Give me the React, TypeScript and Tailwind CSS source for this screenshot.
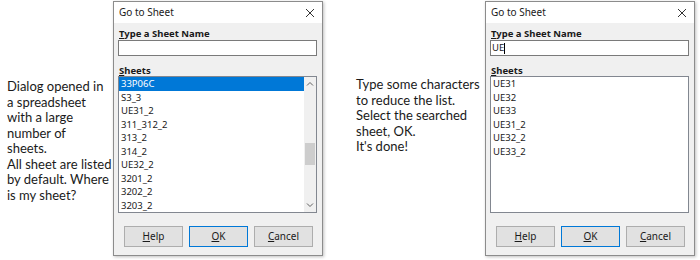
import React from 'react';

const ui = "font-['Noto_Sans','Open_Sans',sans-serif]";
const note = "font-['Lato','Open_Sans',sans-serif] text-[13px] leading-[15.5px] text-[#1a1a1a] whitespace-nowrap";

const allSheets = ['33P06C', 'S3_3', 'UE31_2', '311_312_2', '313_2', '314_2', 'UE32_2', '3201_2', '3202_2', '3203_2'];
const filtered = ['UE31', 'UE32', 'UE33', 'UE31_2', 'UE32_2', 'UE33_2'];

const leftNote = ['Dialog opened in', 'a spreadsheet', 'with a large', 'number of', 'sheets.', 'All sheet are listed', 'by default. Where', 'is my sheet?'];
const rightNote = ['Type some characters', 'to reduce the list.', 'Select the searched', 'sheet, OK.', "It's done!"];

function CloseIcon() {
    return (
        <svg width="10" height="10" viewBox="0 0 10 10">
            <path d="M1 1 L9 9 M9 1 L1 9" stroke="#333" strokeWidth="1" fill="none" />
        </svg>
    );
}

function Chevron({ up }: { up?: boolean }) {
    return (
        <svg width="8" height="5" viewBox="0 0 8 5">
            <path d={up ? 'M1 4.5 L4 1.5 L7 4.5' : 'M1 0.5 L4 3.5 L7 0.5'} stroke="#606060" strokeWidth="1" fill="none" />
        </svg>
    );
}

function Btn({ first, rest, primary }: { first: string; rest: string; primary?: boolean }) {
    return (
        <div
            className={`w-[59px] h-[21px] flex items-center justify-center text-[10px] text-[#1a1a1a] bg-[#e1e1e1] border ${primary ? 'border-[#0078d7]' : 'border-[#adadad]'}`}
        >
            <span className="underline underline-offset-1">{first}</span>
            {rest}
        </div>
    );
}

function GoToSheet({ query, sheets, selected, scroll }: { query: string; sheets: string[]; selected?: number; scroll?: boolean }) {
    return (
        <div className={`w-[210px] h-[255px] mt-[1px] border border-[#8c8c8c] bg-[#f0f0f0] flex flex-col shadow-[1px_1px_3px_rgba(0,0,0,0.25)] ${ui}`}>
            {/* title bar */}
            <div className="h-[21px] bg-white flex items-center justify-between pl-[5px] pr-[7px]">
                <span className="text-[10px] text-[#1a1a1a]">Go to Sheet</span>
                <CloseIcon />
            </div>

            <div className="pl-[4px] pr-[5px] pt-[5px]">
                <div className="pl-[1px] h-[12px] leading-[12px] text-[9.5px] font-bold text-[#1a1a1a]">
                    <span className="underline underline-offset-1">T</span>ype a Sheet Name
                </div>
                <div className="h-[16px] bg-white border border-[#7a7a7a] flex items-center pl-[1px] text-[9.5px] text-[#1a1a1a]">
                    {query}
                    {query && <span className="w-px h-[11px] bg-black" />}
                </div>

                <div className="mt-[9px] pl-[1px] h-[11px] leading-[11px] text-[9.5px] font-bold text-[#1a1a1a]">
                    <span className="underline underline-offset-1">S</span>heets
                </div>
                <div className="h-[137px] bg-white border border-[#828790] flex">
                    <div className="flex-1 flex flex-col">
                        {sheets.map((s, i) => (
                            <div
                                key={s}
                                className={`h-[13.5px] leading-[13.5px] pl-[2px] text-[9.5px] ${i === selected ? 'bg-[#0078d7] text-white' : 'text-[#1a1a1a]'}`}
                            >
                                {s}
                            </div>
                        ))}
                    </div>
                    {scroll && (
                        <div className="w-[12px] bg-[#f0f0f0] flex flex-col items-center">
                            <div className="h-[13px] flex items-center justify-center">
                                <Chevron up />
                            </div>
                            <div className="h-[53px]" />
                            <div className="h-[22px] w-[10px] bg-[#cdcdcd]" />
                            <div className="flex-1" />
                            <div className="h-[13px] flex items-center justify-center">
                                <Chevron />
                            </div>
                        </div>
                    )}
                </div>

                <div className="mt-[13px] pl-[6px] flex gap-[6px]">
                    <Btn first="H" rest="elp" />
                    <Btn first="O" rest="K" primary />
                    <Btn first="C" rest="ancel" />
                </div>
            </div>
        </div>
    );
}

export default function App() {
    return (
        <div className="w-[700px] h-[260px] bg-white flex overflow-hidden">
            <div className={`w-[113px] pl-[7px] pt-[79px] ${note}`}>
                {leftNote.map((l) => (
                    <div key={l}>{l}</div>
                ))}
            </div>

            <GoToSheet query="" sheets={allSheets} selected={0} scroll />

            <div className={`w-[162px] pl-[33px] pt-[77px] ${note}`}>
                {rightNote.map((l) => (
                    <div key={l}>{l}</div>
                ))}
            </div>

            <GoToSheet query="UE" sheets={filtered} />
        </div>
    );
}
